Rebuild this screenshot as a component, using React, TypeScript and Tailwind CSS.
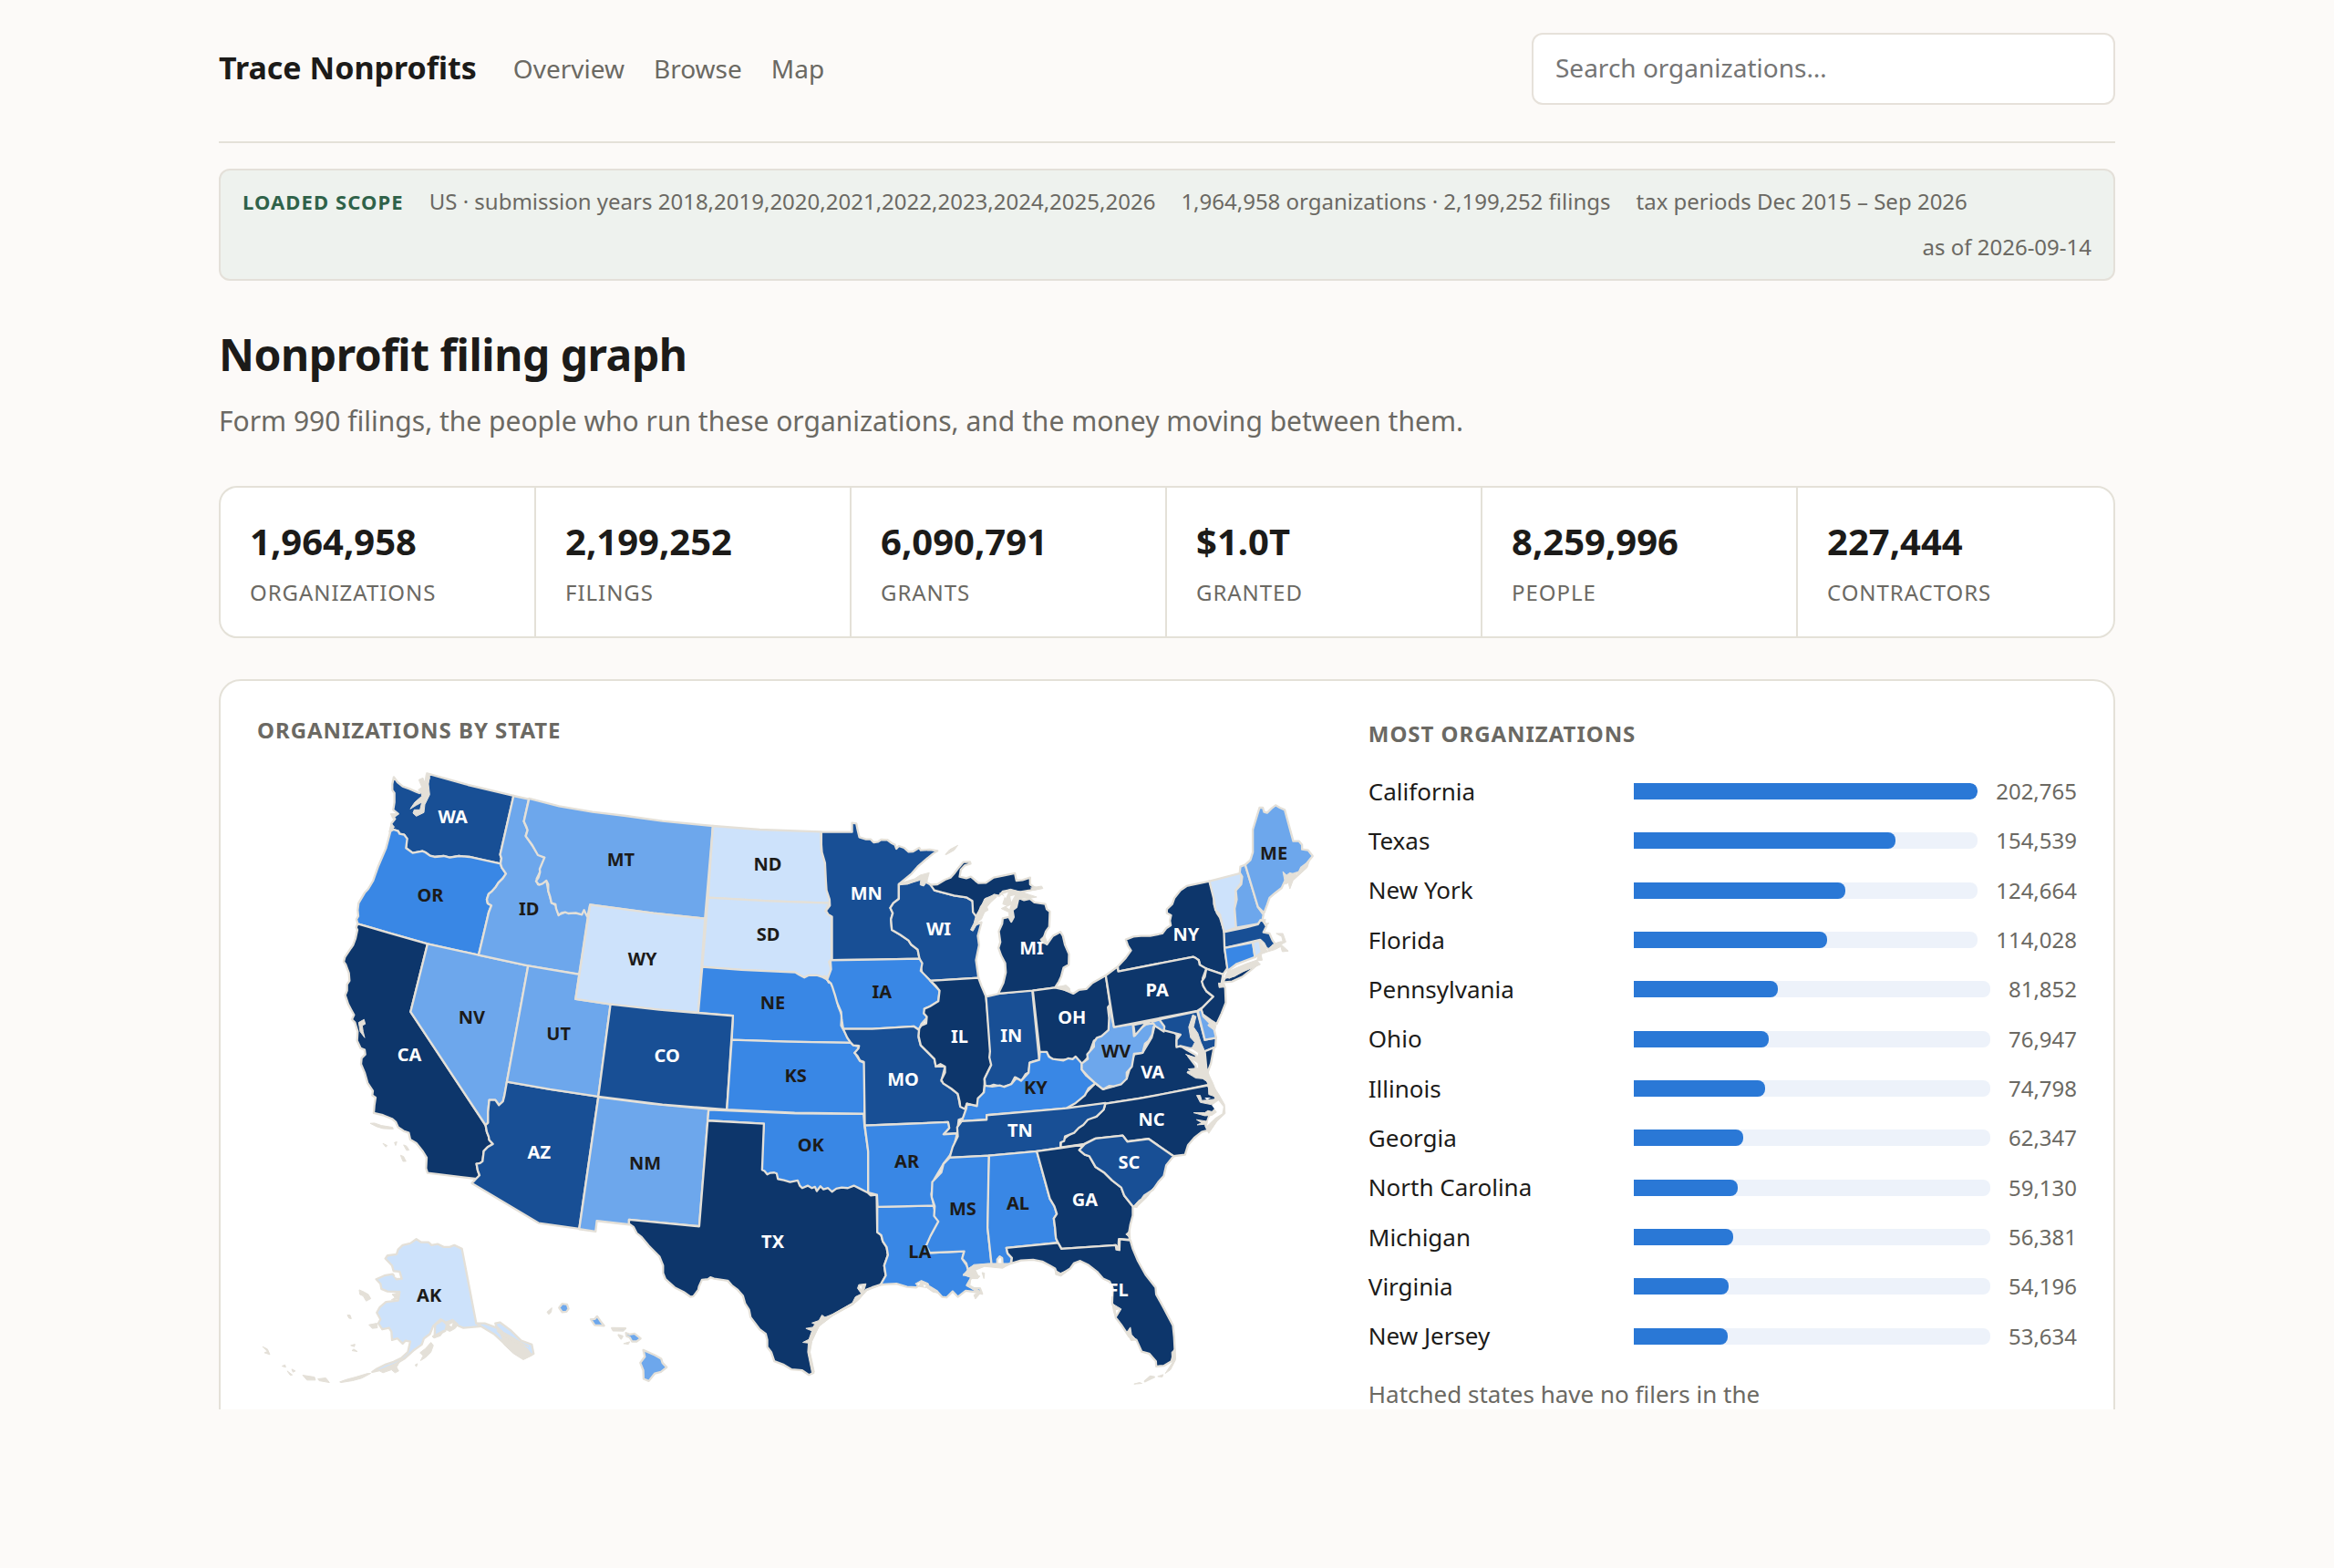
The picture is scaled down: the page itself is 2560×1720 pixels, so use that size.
import { useState } from "react";

const NAVY = "#0d366b";
const DEEP = "#184f95";
const BLUE = "#3987e5";
const SKY = "#6da7ec";
const PALE = "#cde2fb";
const LINE = "#e4e0d8";

type StateShape = {
  id: string;
  fill: string;
  d: string;
  label?: [number, number];
};

type Region = { x: number; y: number; states: StateShape[]; coast?: string; water?: string };

// Outlines are local to each region; x / y move the region onto the map.
const regions: Region[] = [
  {
    x: 270,
    y: 0,
    states: [
      { id: "WA", fill: DEEP, label: [410, 250], d: "M216 97L228 114L245 128L268 136L290 146L300 150L318 140L325 120L332 100L325 85L460 123L610 159L566 352L570 365L567 382L510 370L465 360L430 357L400 362L380 357L350 360L335 356L320 345L310 341L278 347L256 331L258 300L250 287L235 284L230 275L215 270L205 275L208 250L220 235L212 228L230 218L214 205L218 180L218 150L211 140L211 120Z" },
      { id: "OR", fill: BLUE, label: [336, 506], d: "M205 275L215 270L230 275L235 284L250 287L260 300L256 331L278 347L310 341L320 345L335 356L350 360L380 357L400 362L430 357L465 360L567 382L571 395L585 415L575 430L560 445L552 458L540 472L528 482L522 500L525 513L537 520L528 543L523 565L495 683L327 646L200 610L97 580L93 565L99 555L97 535L100 512L120 478L132 465L148 438L165 390L190 332L200 295Z" },
      { id: "CA", fill: NAVY, label: [267, 1031], d: "M97 580L200 610L327 646L271 870L518 1243L522 1265L528 1280L530 1292L542 1305L526 1314L512 1328L508 1362L495 1372L488 1370L492 1392L498 1408L490 1420L327 1400L322 1385L324 1350L312 1330L290 1302L270 1290L265 1268L248 1262L230 1250L222 1232L210 1222L180 1210L150 1203L152 1178L156 1152L145 1145L147 1130L130 1105L120 1070L108 1042L110 1022L122 1010L120 995L107 990L95 965L97 935L88 905L78 895L85 880L75 862L66 845L56 815L62 800L62 780L70 768L68 742L58 715L51 705L55 690L75 660L82 650L90 628L96 600L92 592Z" },
      { id: "NV", fill: SKY, label: [472, 908], d: "M327 646L495 683L658 718L588 1100L580 1145L575 1165L562 1177L550 1160L530 1160L526 1200L526 1235L518 1243L271 870Z" },
      { id: "ID", fill: SKY, label: [661, 551], d: "M610 159L660 170L644 243L656 272L650 290L690 350L712 362L697 410L686 432L690 450L718 438L724 470L735 510L750 520L758 550L780 542L830 547L842 535L855 555L826 746L658 718L495 683L523 565L528 543L537 520L525 513L522 500L528 482L540 472L552 458L560 445L575 430L585 415L571 395L567 382L570 365L566 352Z" },
    ],
    coast: "M298 106L312 100L318 116L322 88L334 92L330 120L334 155L318 188L315 214L290 226L279 216L283 205L302 205L308 180L290 190L270 202L285 180L308 160L305 145L296 140L308 130ZM100 905L118 895L122 910L112 915L115 935L120 955L105 935ZM138 1237L152 1236L175 1244L212 1250L214 1256L180 1254L160 1248ZM180 1303L194 1310L190 1315ZM218 1300L226 1298L222 1310ZM248 1308L258 1312L266 1325L258 1326ZM238 1342L248 1346L256 1362L246 1362ZM205 218L230 218L214 235ZM200 278L208 250L218 262Z",
  },
  {
    x: 0,
    y: 0,
    states: [
      { id: "AZ", fill: DEEP, label: [964, 1353], d: "M858 1100L1000 1125L1159 1149L1096 1584L962 1565L743 1434L754 1422L768 1408L762 1392L758 1370L770 1368L778 1362L782 1328L796 1314L812 1305L800 1292L798 1280L792 1265L788 1243L796 1235L796 1200L800 1160L820 1160L832 1177L845 1165L850 1145Z" },
    ],
  },
  {
    x: 1110,
    y: 1080,
    states: [
      { id: "NM", fill: SKY, label: [203, 308], d: "M49 70L220 92L412 110L381 496L150 474L150 490L44 478L40 513L-14 505Z" },
      { id: "OK", fill: BLUE, label: [748, 250], d: "M412 112L700 124L922 126L925 165L938 250L937 390L700 400L580 320L594 158L409 148Z" },
      { id: "TX", fill: NAVY, label: [623, 566], d: "M409 148L594 158L588 310L596 314L605 325L615 320L628 319L636 322L640 340L660 344L680 350L705 345L712 362L720 370L738 362L752 370L762 366L768 380L780 364L790 374L805 370L818 382L832 372L850 368L870 370L890 362L910 372L937 386L945 394L965 392L967 515L980 525L985 545L998 565L1002 590L990 625L995 658L978 688L950 697L930 705L905 735L885 752L820 788L775 822L748 870L742 910L757 978L742 985L720 970L685 967L660 952L628 940L618 910L605 893L605 870L600 850L580 835L550 795L545 770L532 750L525 725L508 705L488 690L475 675L455 672L430 668L418 664L410 670L390 672L380 695L378 705L362 726L352 728L330 712L300 697L270 670L262 650L262 625L250 595L215 560L190 530L175 518L165 498L150 488L150 474L381 496Z" },
      { id: "LA", fill: BLUE, label: [1107, 600], d: "M967 432L1152 428L1158 450L1175 480L1150 520L1138 583L1253 578L1248 605L1262 625L1268 642L1252 655L1278 662L1262 690L1280 700L1305 700L1312 718L1290 712L1258 708L1232 728L1215 710L1195 730L1180 728L1162 708L1140 695L1110 685L1095 697L1065 695L1030 685L1000 686L978 688L995 658L990 625L1002 590L998 565L985 545L980 525L967 515Z" },
    ],
    coast: "M978 690L940 700L905 738L885 755L820 790L775 825L752 875L746 910L760 975L752 978L738 910L740 880L722 878L742 868L752 840L732 832L755 828L762 818L752 814L775 806L785 788L795 795L820 785L885 748L895 728L915 718L902 700L906 688L930 685L922 712ZM1092 685L1112 674L1135 684L1140 700L1165 715L1150 712L1130 698L1105 694ZM1252 655L1272 640L1285 655L1305 660L1298 668L1275 668L1272 690L1290 700L1310 712L1290 735L1285 722L1296 715L1270 695L1262 688L1275 665Z",
    water: "M1098 684L1108 682L1104 690ZM1118 688L1128 690L1122 697ZM908 694L916 692L914 704Z",
  },
  {
    x: 870,
    y: 60,
    states: [
      { id: "UT", fill: SKY, label: [158, 904], d: "M58 658L226 687L214 768L329 785L289 1089L130 1065L-12 1040Z" },
      { id: "MT", fill: SKY, label: [363, 329], d: "M61 108L160 133L270 152L380 165L500 182L666 198L640 503L470 485L262 457L253 497L248 488L242 475L235 490L215 484L190 486L180 482L168 484L158 492L150 470L148 456L135 452L130 430L124 412L124 390L118 378L105 388L94 392L84 380L92 368L97 350L96 340L112 302L90 294L72 262L50 232L56 212L52 200L44 183Z" },
      { id: "ND", fill: PALE, label: [846, 344], d: "M666 198L820 210L1021 217L1023 280L1036 320L1041 400L1051 430L1050 452L850 445L650 434Z" },
      { id: "SD", fill: PALE, label: [848, 577], d: "M650 434L850 445L1050 452L1037 478L1057 497L1057 638L1048 645L1055 670L1045 700L1025 694L1010 690L980 690L967 697L950 688L937 680L760 672L631 662Z" },
      { id: "WY", fill: PALE, label: [434, 656], d: "M262 457L470 485L640 503L618 813L490 803L350 788L214 768Z" },
      { id: "NE", fill: BLUE, label: [863, 802], d: "M631 662L760 672L937 680L950 688L967 697L980 690L1010 690L1028 696L1050 708L1062 730L1075 765L1078 790L1090 820L1088 855L1105 885L1120 912L910 908L728 902L732 823L618 813Z" },
      { id: "CO", fill: DEEP, label: [515, 976], d: "M329 785L490 803L732 823L712 1132L500 1115L289 1089Z" },
      { id: "KS", fill: BLUE, label: [938, 1042], d: "M728 902L910 908L1120 912L1130 920L1146 924L1144 934L1133 945L1150 972L1165 978L1165 1145L935 1142L712 1132Z" },
    ],
    coast: "M1030 690L1045 694L1056 712L1046 716L1040 704Z",
  },
  {
    x: 1890,
    y: 180,
    states: [
      { id: "MN", fill: DEEP, label: [151, 320], d: "M3 98L104 98L104 68L118 70L122 90L128 115L150 122L165 122L175 132L190 130L200 123L220 124L235 135L245 140L250 153L258 144L275 150L290 163L305 162L325 150L330 158L360 156L385 160L370 170L345 190L320 212L300 235L258 270L258 318L240 332L230 348L238 365L232 385L235 420L262 436L290 455L298 468L320 485L326 515L170 518L38 520L38 377L26 370L18 357L31 340L30 320L20 290L18 260L15 200L5 165L3 140Z" },
      { id: "WI", fill: DEEP, label: [389, 438], d: "M258 270L285 268L310 258L330 250L345 240L350 265L370 275L375 290L400 297L440 307L480 313L500 325L506 352L515 380L508 405L530 395L518 440L522 470L512 520L520 578L362 588L335 565L330 540L326 515L320 485L298 468L290 455L262 436L235 420L232 385L238 365L230 348L240 332L258 318Z" },
      { id: "MI-U", fill: NAVY, d: "M362 272L385 270L410 255L428 248L440 235L455 215L470 197L492 196L494 202L475 208L462 222L458 245L480 250L495 245L510 258L520 266L545 265L570 248L600 242L640 234L645 258L665 256L690 248L690 270L700 278L715 284L690 290L655 296L620 290L600 294L588 308L572 305L560 316L545 318L535 335L528 345L520 368L512 375L502 362L500 325L480 313L440 307L400 297L375 290Z" },
      { id: "IA", fill: BLUE, label: [202, 644], d: "M33 520L170 518L326 515L335 530L330 555L345 570L362 588L392 620L388 655L365 670L342 680L350 710L332 730L325 750L308 738L170 746L75 746L70 715L68 690L55 660L48 635L40 610L35 597L22 585L35 550Z" },
      { id: "MO", fill: DEEP, label: [272, 932], d: "M75 746L170 746L308 738L325 750L323 775L330 800L375 845L380 870L410 870L398 918L452 960L460 1000L480 1010L470 1040L455 1045L450 1090L405 1093L422 1075L420 1053L250 1060L146 1064L143 855L130 850L122 835L112 825L125 810L127 802L108 800L100 792L88 775Z" },
      { id: "IL", fill: NAVY, label: [458, 792], d: "M362 588L520 578L530 605L545 640L556 760L560 820L562 865L552 885L540 910L540 940L535 965L520 975L518 1000L500 998L482 992L475 1010L460 1002L458 985L452 960L430 942L404 926L398 914L410 890L410 870L395 862L380 870L375 845L355 825L330 800L323 770L325 745L332 735L348 728L350 706L340 695L342 680L360 672L388 655L392 620L380 605Z" },
      { id: "IN", fill: DEEP, label: [628, 789], d: "M545 640L590 630L697 618L720 848L705 852L690 856L685 890L675 895L662 917L640 905L628 928L600 937L570 930L543 940L540 910L550 890L562 865L556 840L558 820Z" },
      { id: "AR", fill: BLUE, label: [284, 1202], d: "M146 1064L250 1060L420 1053L424 1072L405 1093L450 1090L440 1130L428 1160L405 1190L375 1240L365 1290L373 1328L188 1332L186 1292L157 1285L157 1150Z" },
    ],
    coast: "M258 268L310 252L328 240L358 232L350 262L340 276L328 272L330 256L290 268ZM494 420L505 398L512 372L530 342L540 318L572 304L580 312L560 330L548 345L552 355L540 362L530 385L520 392L502 424ZM411 172L425 156L452 142L440 158L415 172ZM590 300L625 286L660 295L690 305L712 312L690 316L655 315L640 345L638 380L630 395L622 385L620 362L595 350L615 340L600 335L608 310ZM692 282L728 276L732 284L700 290Z",
    water: "M600 302L618 296L610 316ZM625 310L640 306L628 328ZM612 345L626 338L622 352Z",
  },
  {
    x: 2310,
    y: 240,
    states: [
      { id: "MI", fill: NAVY, label: [275, 440], d: "M232 255L250 262L270 258L285 270L320 275L325 292L335 300L333 350L322 365L312 395L325 408L345 380L370 367L378 380L385 410L398 440L397 475L380 485L372 515L365 530L352 550L279 560L165 570L182 535L190 500L188 470L175 445L166 420L172 400L167 365L178 340L180 322L200 318L208 333L216 318L212 295L225 285Z" },
      { id: "OH", fill: NAVY, label: [408, 670], d: "M279 560L352 550L380 556L412 570L430 558L455 555L475 535L519 510L535 620L530 690L505 715L480 725L460 780L440 803L420 785L345 790L325 768L302 765Z" },
      { id: "VA", fill: NAVY, label: [673, 848], d: "M390 947L450 900L485 865L510 885L545 875L588 850L612 770L640 765L670 715L680 675L712 690L735 690L752 705L752 742L770 745L785 755L815 772L822 795L790 775L815 808L815 825L790 828L820 840L850 850L858 870L690 905L518 932Z" },
      { id: "KY", fill: BLUE, label: [288, 900], d: "M118 895L120 873L145 876L170 872L185 877L208 868L225 848L240 857L265 830L268 798L300 788L302 762L325 762L332 778L345 785L380 790L395 783L410 786L420 777L440 800L440 820L455 840L485 865L462 882L450 905L420 930L390 947L250 960L127 970L127 985L45 990L60 948L62 932L95 940L98 915Z" },
      { id: "WV", fill: SKY, label: [553, 779], d: "M530 610L546 680L608 670L612 710L625 690L650 672L690 662L676 680L672 705L660 725L648 735L640 765L612 768L605 810L588 830L588 850L570 868L545 875L530 874L510 885L485 865L460 842L440 820L440 800L460 785L458 770L480 745L480 730L490 715L505 710L528 690L530 650L526 615Z" },
    ],
    coast: "M352 548L375 545L388 542L400 552L402 565L385 560ZM303 392L318 378L328 408L312 404Z",
  },
  {
    x: 2730,
    y: 120,
    states: [
      { id: "NY", fill: NAVY, label: [363, 515], d: "M139 600L165 572L182 548L172 532L165 512L190 502L215 500L245 500L285 492L298 475L313 465L310 450L314 432L300 425L300 412L318 395L325 375L345 350L365 336L440 320L455 360L455 395L465 425L475 440L490 487L490 540L500 605L485 627L430 608L412 605L405 580L387 569L140 617Z" },
      { id: "NY-LI", fill: NAVY, d: "M484 653L492 638L520 632L550 615L575 600L600 592L575 614L548 635L515 650Z" },
      { id: "PA", fill: NAVY, label: [268, 698], d: "M99 630L137 602L140 617L387 569L394 572L405 580L408 595L430 608L418 640L420 665L430 682L453 700L435 718L418 735L400 747L126 800Z" },
      { id: "NJ", fill: NAVY, d: "M430 608L485 627L480 655L492 670L494 720L480 755L464 790L445 778L418 758L412 742L435 718L453 700L430 682L420 665L415 650L425 635Z" },
      { id: "VT", fill: PALE, d: "M440 320L545 293L545 325L527 350L525 410L528 473L488 487L475 430L460 415L455 380Z" },
      { id: "NH", fill: SKY, d: "M542 272L558 266L600 405L618 430L615 445L600 460L528 473L523 410L530 380L527 350L545 330L548 305L540 292Z" },
      { id: "ME", fill: SKY, label: [652, 250], d: "M605 78L616 78L620 92L630 95L645 80L658 70L672 78L688 85L716 188L735 188L745 200L745 215L765 218L780 237L760 262L742 275L735 290L705 300L688 320L678 342L655 360L638 375L630 398L620 424L600 405L558 266L575 250L583 225L583 150Z" },
      { id: "MA", fill: DEEP, d: "M488 487L560 472L600 462L608 448L620 452L628 468L618 488L638 492L648 515L658 528L675 522L668 535L650 530L640 545L628 540L620 525L607 513L490 540Z" },
      { id: "CT", fill: BLUE, d: "M490 540L583 522L590 570L530 592L500 615Z" },
      { id: "RI", fill: PALE, d: "M583 520L605 515L612 555L590 570Z" },
      { id: "MD", fill: DEEP, d: "M190 793L400 748L425 842L462 835L460 865L425 880L400 870L375 870L345 862L332 866L332 842L345 825L295 812L262 788L228 790L215 805L195 828Z" },
      { id: "DE", fill: SKY, d: "M402 748L413 740L420 765L440 785L455 805L462 835L425 842Z" },
      { id: "VA-E", fill: NAVY, d: "M425 880L455 868L445 920L432 955Z" },
      { id: "WV-E", fill: SKY, d: "M252 783L275 775L292 798L290 815L262 797Z" },
    ],
    coast: "M385 760L396 765L388 800L402 820L412 850L425 880L428 925L440 960L452 985L465 1020L450 1020L440 985L418 970L395 968L366 950L385 948L370 938L405 935L402 915L362 890L400 902L405 885L382 870L392 850L378 835L372 800ZM445 780L462 795L458 812L435 795ZM682 288L694 300L705 292L728 300L740 280L770 250L762 275L715 318L705 345L700 325L690 330ZM612 448L625 445L622 460L636 458L625 468ZM660 492L682 492L692 520L676 528L700 550L680 552L675 535L656 545L632 552L636 540L655 525L670 520L682 518L678 502ZM606 515L620 535L632 552L610 560L614 580L596 582L602 560L612 550ZM492 632L500 618L560 592L595 580L608 594L550 618L505 640ZM470 655L490 658L492 668L472 670Z",
  },
  {
    x: 2250,
    y: 1080,
    states: [
      { id: "NC", fill: NAVY, label: [730, 165], d: "M578 92L690 75L915 32L925 50L950 85L945 105L920 130L908 165L915 180L895 185L870 205L850 228L840 260L802 265L720 208L650 217L635 197L545 207L505 226L430 236L432 218L445 205L490 170L520 140L548 135L572 112Z" },
      { id: "TN", fill: DEEP, label: [297, 201], d: "M105 150L187 145L187 130L450 107L578 90L572 112L548 135L520 145L505 162L490 172L475 188L445 200L442 215L430 220L430 238L352 249L195 263L65 270L75 235L92 200L90 170Z" },
      { id: "MS", fill: BLUE, label: [108, 458], d: "M65 270L195 263L193 400L190 500L203 620L180 622L145 628L125 637L120 618L106 602L113 578L0 583L-12 560L2 528L28 480L14 462L16 430L6 400L8 350L38 318L45 290Z" },
      { id: "AL", fill: BLUE, label: [290, 440], d: "M195 263L352 249L395 405L410 430L418 455L408 470L412 500L415 535L422 550L252 567L256 585L270 600L266 618L240 630L238 600L230 595L222 605L222 628L203 620L190 500L193 330Z" },
      { id: "GA", fill: NAVY, label: [510, 429], d: "M352 249L430 238L510 226L492 245L510 260L525 265L545 300L575 320L600 345L630 368L640 395L668 430L668 460L660 490L655 520L658 540L622 538L620 572L612 558L433 570L422 550L415 535L412 500L408 470L418 455L410 430L395 405Z" },
      { id: "SC", fill: DEEP, label: [656, 305], d: "M492 245L510 225L545 207L635 197L650 217L720 208L802 265L778 295L770 330L752 350L735 375L705 395L680 432L668 430L640 395L630 368L600 345L575 320L545 300L525 265L510 260Z" },
      { id: "FL", fill: NAVY, label: [620, 725], d: "M252 567L422 550L433 570L612 558L614 572L624 574L625 538L660 542L668 570L685 610L710 655L743 697L745 720L770 765L800 822L804 860L806 900L795 940L770 955L745 957L744 940L722 915L697 908L680 870L655 858L630 820L612 797L610 770L600 750L602 700L592 678L570 668L550 645L520 622L495 610L475 617L462 635L430 655L418 650L412 635L395 625L370 612L340 606L300 608L268 618L270 600L256 585Z" },
      { id: "FL-K", fill: NAVY, d: "M708 1006L726 990L738 992Z" },
    ],
    coast: "M915 0L930 30L950 60L970 95L972 125L945 150L918 190L912 178L905 160L880 162L895 155L878 145L910 150L935 130L905 132L868 122L905 122L915 115L935 120L945 100L925 95L890 88L878 65L890 65L895 82L935 78L942 70L918 62ZM600 750L630 768L612 798L605 778ZM648 845L660 828L664 852L680 870L662 872ZM808 900L809 935L792 968L775 980L798 945L796 910ZM750 990L768 984L765 992ZM672 1015L690 1010L698 1013ZM412 640L430 650L460 638L432 660L414 655ZM125 637L145 622L200 618L262 618L240 634L180 628L150 640L160 660L145 668L140 650L110 658ZM172 648L180 650L178 668ZM670 430L690 408L700 408L740 365L715 400L682 432ZM645 522L658 510L660 535Z",
    water: "M928 98L950 82L966 102L962 125L940 138L912 165L918 140L945 120ZM612 772L622 770L614 785ZM904 72L925 72L912 80Z",
  },
  {
    x: 0,
    y: 1560,
    states: [
      { id: "AK", fill: PALE, label: [602, 263], d: "M560 58L575 68L600 68L610 78L630 74L650 84L670 84L685 78L710 90L735 220L757 335L775 345L715 350L690 340L660 335L640 322L615 345L605 370L585 385L578 405L550 425L520 452L490 470L445 488L415 495L430 485L460 470L485 462L510 450L532 430L540 395L525 392L515 402L498 385L480 390L478 362L470 350L448 355L435 335L442 322L430 300L440 282L460 265L500 260L505 232L465 230L445 222L442 205L428 190L455 178L482 173L495 190L512 188L505 165L485 163L480 145L458 122L465 112L495 108L500 92L515 78L540 72Z" },
      { id: "AK-S", fill: PALE, d: "M757 335L785 335L825 350L820 335L835 332L870 358L905 392L940 405L946 435L915 450L880 430L850 402L815 370L785 352Z" },
      { id: "AK-P", fill: PALE, d: "M622 340L645 325L662 340L655 360L620 378Z" },
      { id: "HI-1", fill: SKY, d: "M1030 284L1040 271L1056 273L1061 287L1054 297L1040 298Z" },
      { id: "HI-2", fill: SKY, d: "M1134 322L1147 321L1155 312L1166 328L1178 343L1147 341Z" },
      { id: "HI-3", fill: SKY, d: "M1204 351L1248 352L1240 359L1208 358Z" },
      { id: "HI-4", fill: SKY, d: "M1250 367L1262 372L1278 369L1298 385L1285 395L1270 395L1262 381L1252 377Z" },
      { id: "HI-5", fill: SKY, d: "M1226 374L1238 378L1234 385Z" },
      { id: "HI-6", fill: SKY, d: "M1307 423L1345 440L1366 452L1370 465L1384 480L1365 495L1345 500L1325 525L1308 518L1307 490L1297 465L1312 445Z" },
    ],
    coast: "M990 298L1006 284L1004 298L996 306ZM1242 402L1262 396L1258 404ZM372 225L388 232L402 240L410 254L395 262L385 245L374 240ZM333 308L342 308L346 320L338 318ZM404 340L430 335L432 350L415 352ZM344 408L358 404L356 412ZM348 425L354 420L366 428ZM54 412L70 420L78 438L60 432L70 428ZM118 476L128 472L130 480ZM135 492L152 505L145 506ZM150 486L162 492L154 496ZM186 506L225 512L228 522L200 522ZM236 518L262 515L274 530L240 524ZM308 528L330 520L360 512L400 500L410 500L380 516L350 524L312 530ZM440 492L475 474L505 462L495 480L502 492L490 498L478 488L450 498ZM572 432L590 418L608 398L616 408L608 430L590 448L574 458L582 442ZM556 472L564 468L560 478ZM658 330L680 322L698 338L688 352L670 362L658 356ZM612 378L650 358L640 376L618 384ZM480 240L500 235L500 255L478 258L490 250ZM838 372L855 382L880 395L900 402L925 418L942 440L912 455L880 435L848 405ZM826 345L848 365L872 378L905 398L930 412L895 402L868 392L845 378L826 362Z",
    water: "M488 180L498 172L496 186ZM668 340L680 334L676 346Z",
  },
];

const stats = [
  { value: "1,964,958", label: "Organizations" },
  { value: "2,199,252", label: "Filings" },
  { value: "6,090,791", label: "Grants" },
  { value: "$1.0T", label: "Granted" },
  { value: "8,259,996", label: "People" },
  { value: "227,444", label: "Contractors" },
];

const topStates = [
  { name: "California", count: 202765 },
  { name: "Texas", count: 154539 },
  { name: "New York", count: 124664 },
  { name: "Florida", count: 114028 },
  { name: "Pennsylvania", count: 81852 },
  { name: "Ohio", count: 76947 },
  { name: "Illinois", count: 74798 },
  { name: "Georgia", count: 62347 },
  { name: "North Carolina", count: 59130 },
  { name: "Michigan", count: 56381 },
  { name: "Virginia", count: 54196 },
  { name: "New Jersey", count: 53634 },
];

function StateMap() {
  return (
    <svg viewBox="36 -3 3507 2193" className="mt-0.5 block w-full" role="img" aria-label="Organizations by state">
      {regions.map((region, i) => (
        <g
          key={i}
          transform={`translate(${region.x} ${region.y})`}
          stroke={LINE}
          strokeWidth={7}
          strokeLinejoin="round"
        >
          {region.states.map((s) => (
            <path key={s.id} d={s.d} fill={s.fill} />
          ))}
          {region.coast && <path d={region.coast} fill={LINE} strokeWidth={3} />}
          {region.water && <path d={region.water} fill="#ffffff" stroke="none" />}
        </g>
      ))}
      {regions.map((region, i) => (
        <g key={i} transform={`translate(${region.x} ${region.y})`} fontSize={60} fontWeight={700} textAnchor="middle">
          {region.states.map(
            (s) =>
              s.label && (
                <text
                  key={s.id}
                  x={s.label[0]}
                  y={s.label[1]}
                  fill={s.fill === NAVY || s.fill === DEEP ? "#ffffff" : "#1c1b19"}
                >
                  {s.id}
                </text>
              ),
          )}
        </g>
      ))}
    </svg>
  );
}

function StateBars() {
  const max = topStates[0].count;
  return (
    <ol className="mt-5 grid h-[652px] auto-rows-fr">
      {topStates.map((s) => (
        <li key={s.name} className="flex items-center gap-5">
          <a href="#" className="w-[271px] shrink-0 text-[26px]">
            {s.name}
          </a>
          <div className="h-[18px] flex-1 overflow-hidden rounded-r-lg bg-[#edf2fa]">
            <div className="h-full rounded-r-lg bg-[#2a78d6]" style={{ width: `${(s.count / max) * 100}%` }} />
          </div>
          <span className="text-[24px] text-[#6b6963]">{s.count.toLocaleString("en-US")}</span>
        </li>
      ))}
    </ol>
  );
}

export default function App() {
  const [query, setQuery] = useState("");

  return (
    <div className="min-h-screen bg-[#fcfaf8] font-['Noto_Sans',sans-serif] text-[#1c1b19]">
      <div className="h-[calc(90vh-2px)] overflow-hidden">
        <div className="mx-auto max-w-[2080px]">
          <header className="flex items-center justify-between border-b-2 border-[#e4e1d8] pt-9 pb-10">
            <div className="flex items-center gap-10 pb-0.5">
              <a href="#" className="text-[34px] font-bold">
                Trace Nonprofits
              </a>
              <nav className="flex gap-8 text-[28px] text-[#6b6963]">
                <a href="#">Overview</a>
                <a href="#">Browse</a>
                <a href="#">Map</a>
              </nav>
            </div>
            <input
              type="search"
              aria-label="Search organizations"
              placeholder="Search organizations…"
              value={query}
              onChange={(e) => setQuery(e.target.value)}
              className="h-[79px] w-[640px] rounded-xl border-2 border-[#e6e1da] bg-white px-6 pb-[3px] text-[28px] placeholder:text-[#757575]"
            />
          </header>

          <section className="mt-7 flex flex-wrap gap-x-7 gap-y-3 rounded-xl border-2 border-[#e4e0d9] bg-[#eef2ee] px-6 pt-[15px] pb-4 text-[24px] leading-[38px] text-[#6b6963]">
            <strong className="text-[22px] font-bold tracking-[0.05em] text-[#2f6249] uppercase">Loaded scope</strong>
            <span>US · submission years 2018,2019,2020,2021,2022,2023,2024,2025,2026</span>
            <span>1,964,958 organizations · 2,199,252 filings</span>
            <span>tax periods Dec 2015 – Sep 2026</span>
            <span className="ml-auto">as of 2026-09-14</span>
          </section>

          <h1 className="mt-12 text-[48px] leading-[66px] font-bold tracking-[-0.01em]">Nonprofit filing graph</h1>
          <p className="mt-4 text-[30px] leading-[48px] text-[#6b6963]">
            Form 990 filings, the people who run these organizations, and the money moving between them.
          </p>

          <dl className="mt-[47px] grid grid-cols-6 divide-x-2 divide-[#e4e1d8] rounded-[20px] border-2 border-[#e4e1d8] bg-white">
            {stats.map((s) => (
              <div key={s.label} className="flex flex-col-reverse gap-2 px-8 pt-[31px] pb-7">
                <dt className="text-[24px] leading-10 tracking-[0.04em] text-[#6b6963] uppercase">{s.label}</dt>
                <dd className="text-[40px] leading-[56px] font-bold">{s.value}</dd>
              </div>
            ))}
          </dl>

          <section className="mt-[45px] grid grid-cols-[3fr_2fr] gap-12 rounded-[24px] border-2 border-[#e4e1d8] bg-white px-10 pt-[38px] pb-10">
            <div>
              <h2 className="text-[24px] leading-8 font-bold tracking-[0.04em] text-[#6b6963] uppercase">
                Organizations by state
              </h2>
              <StateMap />
            </div>
            <div className="pt-1 pl-0.5">
              <h2 className="text-[24px] leading-8 font-bold tracking-[0.04em] text-[#6b6963] uppercase">
                Most organizations
              </h2>
              <StateBars />
              <p className="mt-4 text-[26px] leading-10 text-[#6b6963]">Hatched states have no filers in the</p>
            </div>
          </section>
        </div>
      </div>
    </div>
  );
}
